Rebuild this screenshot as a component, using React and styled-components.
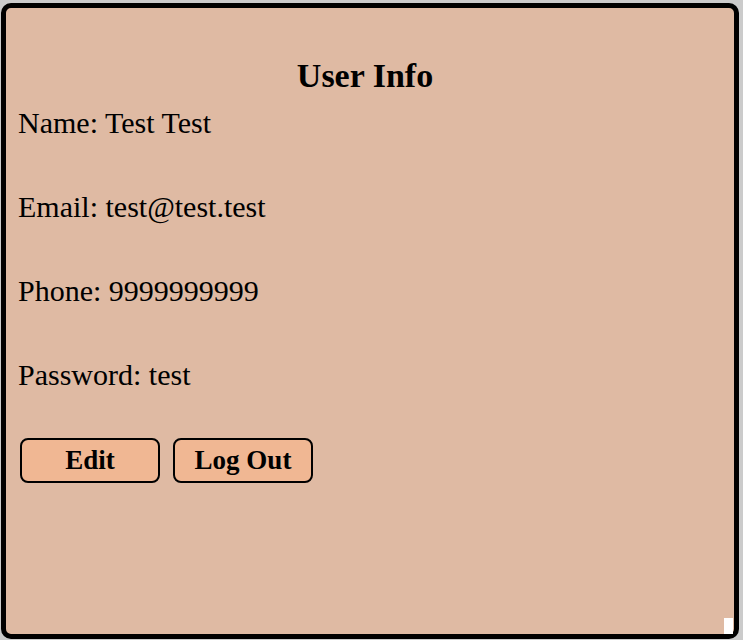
import styled, { createGlobalStyle } from "styled-components";

const GlobalStyle = createGlobalStyle`
  html, body {
    margin: 0;
    padding: 0;
    background: #cbcbcb;
  }
  body {
    font-family: "Liberation Serif", "Times New Roman", serif;
    color: #000;
  }
`;

const Card = styled.div`
  position: relative;
  box-sizing: border-box;
  margin: 3px 4px 0 1px;
  height: 636px;
  border: 5px solid #000;
  border-radius: 10px;
  background: #dfbaa3;
  padding: 48px 12px 0 12px;
  display: flex;
  flex-direction: column;
`;

const Title = styled.h2`
  margin: 0;
  padding-right: 10px;
  text-align: center;
  font-size: 34px;
  line-height: 40px;
  font-weight: bold;
`;

const Fields = styled.div`
  display: flex;
  flex-direction: column;
  gap: 48px;
  margin-top: 9px;
`;

const Field = styled.p`
  margin: 0;
  font-size: 30px;
  line-height: 36px;
`;

const Actions = styled.div`
  display: flex;
  gap: 13px;
  margin: 45px 0 0 2px;
`;

const Button = styled.button`
  box-sizing: border-box;
  width: 140px;
  height: 45px;
  border: 2px solid #000;
  border-radius: 8px;
  background: #f0b793;
  font-family: inherit;
  font-size: 27px;
  font-weight: bold;
  color: #000;
  display: flex;
  align-items: center;
  justify-content: center;
  padding: 0;
  cursor: pointer;
`;

const Corner = styled.span`
  position: absolute;
  right: 1px;
  bottom: 0;
  width: 9px;
  height: 16px;
  background: #fff;
`;

const user = {
  name: "Test Test",
  email: "test@test.test",
  phone: "9999999999",
  password: "test",
};

export default function App() {
  return (
    <>
      <GlobalStyle />
      <Card>
        <Title>User Info</Title>
        <Fields>
          <Field>Name: {user.name}</Field>
          <Field>Email: {user.email}</Field>
          <Field>Phone: {user.phone}</Field>
          <Field>Password: {user.password}</Field>
        </Fields>
        <Actions>
          <Button>Edit</Button>
          <Button>Log Out</Button>
        </Actions>
        <Corner />
      </Card>
    </>
  );
}
